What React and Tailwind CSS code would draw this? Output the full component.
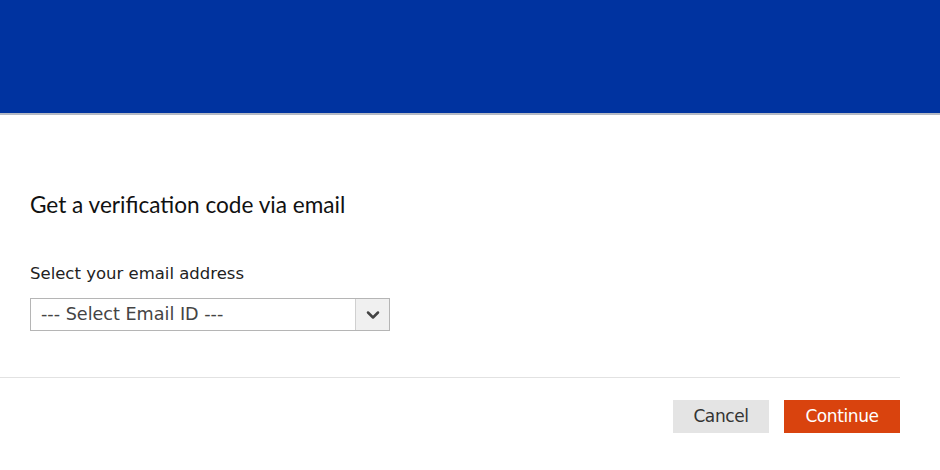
import { ChevronDown } from "lucide-react";

const App = () => {
  return (
    <div className="w-[940px] h-[470px] bg-white overflow-hidden">
      <div className="h-[113px] bg-[#0033a0] border-b-2 border-[#b4b9c4] box-content" />

      <div className="pr-[40px]">
        <div className="pl-[30px] pt-[76px] pb-[46px]">
          <h1 className="text-[22.6px] leading-[28px] text-[#111] font-['Lato',sans-serif]">
            Get a verification code via email
          </h1>

          <label className="block mt-[45px] text-[16.5px] leading-[20px] text-[#222] font-['DejaVu_Sans',sans-serif]">
            Select your email address
          </label>

          <div className="mt-[14px] w-[360px] h-[33px] flex border border-[#b5b5b5] bg-white">
            <div className="flex-1 flex items-center pl-[10px] text-[17.6px] text-[#444] font-['DejaVu_Sans',sans-serif]">
              --- Select Email ID ---
            </div>
            <div className="w-[34px] flex items-center justify-center bg-[#f0f0f0] border-l border-[#d0d0d0]">
              <ChevronDown size={20} strokeWidth={3} className="text-[#444]" />
            </div>
          </div>
        </div>

        <div className="border-t border-[#e2e2e2]" />

        <div className="flex justify-end gap-[15px] pt-[22px]">
          <button className="w-[96px] h-[33px] bg-[#e4e4e4] text-[#333] text-[17px] font-['DejaVu_Sans',sans-serif] tracking-[-0.4px]">
            Cancel
          </button>
          <button className="w-[116px] h-[33px] bg-[#d9430e] text-white text-[17px] font-['DejaVu_Sans',sans-serif] tracking-[-0.4px]">
            Continue
          </button>
        </div>
      </div>
    </div>
  );
};

export default App;
